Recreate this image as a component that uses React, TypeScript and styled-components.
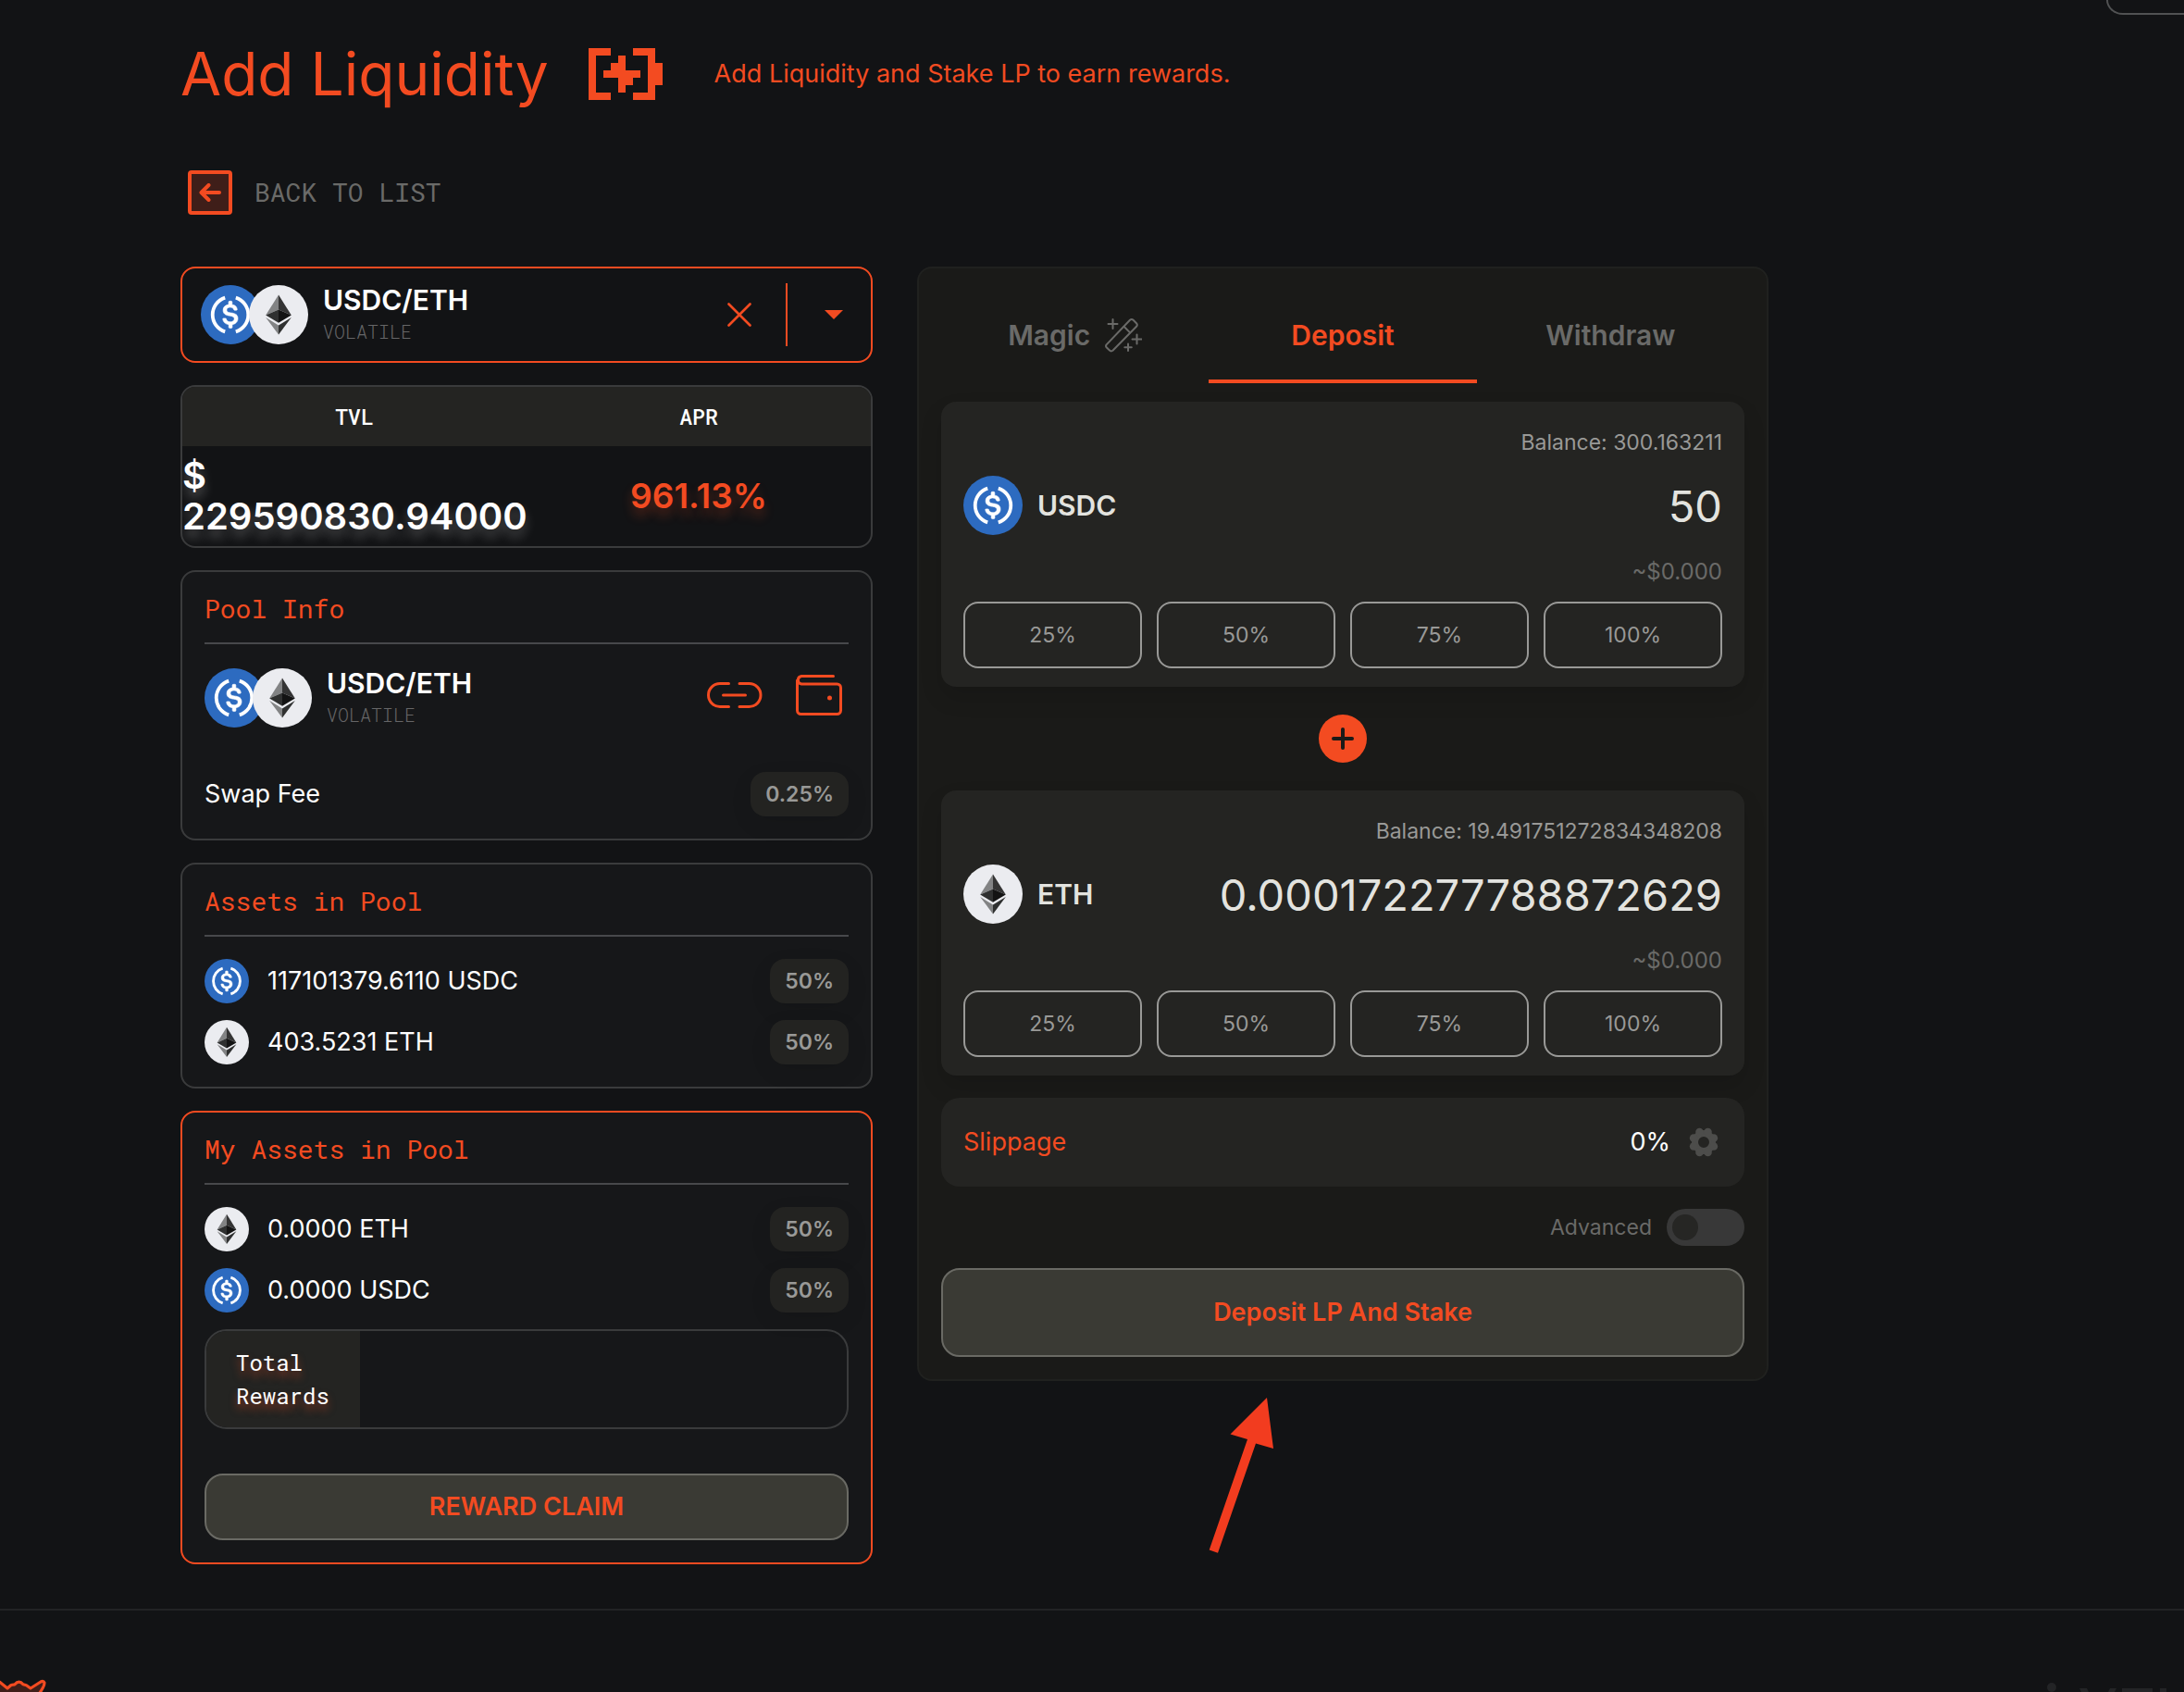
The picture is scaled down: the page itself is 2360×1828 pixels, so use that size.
import React, { useState } from 'react';
import styled, { createGlobalStyle, css } from 'styled-components';

const color = {
  page: '#121315',
  card: '#161719',
  panel: '#1a1a18',
  raised: '#242422',
  orange: '#f34b21',
  line: '#3a3b3c',
  rule: '#47484b',
  white: '#ffffff',
  bone: '#e3e3df',
  muted: '#999997',
  dim: '#6a6a68',
};

const sans = '"Inter", "Liberation Sans", sans-serif';
const mono = '"Roboto Mono", "Liberation Mono", monospace';

const GlobalStyle = createGlobalStyle`
  *, *::before, *::after { box-sizing: border-box; }
  body {
    margin: 0;
    background: ${color.page};
    color: ${color.white};
    font-family: ${sans};
    font-size: 27px;
    line-height: 32px;
    overflow-x: hidden;
  }
  button, input { font: inherit; color: inherit; margin: 0; }
  button { cursor: pointer; }
  h1, h2, p, ul { margin: 0; padding: 0; }
  svg { display: block; flex: none; }
`;

/* ---------- page frame ---------- */

const Page = styled.div`
  display: flex;
  flex-direction: column;
`;

const TopBar = styled.header`
  display: flex;
  justify-content: flex-end;
  height: 16px;
`;

const TopBarMenu = styled.div`
  width: 84px;
  border: 2px solid #515253;
  border-width: 0 0 2px 2px;
  border-bottom-left-radius: 18px 16px;
`;

const Main = styled.main`
  width: 100%;
  max-width: 1911px;
  padding: 24px 0 48px 195px;
`;

const TitleRow = styled.div`
  display: flex;
  align-items: center;
  color: ${color.orange};
`;

const Title = styled.h1`
  margin-right: 43px;
  font-size: 64px;
  line-height: 80px;
  font-weight: 400;
`;

const Subtitle = styled.p`
  margin-left: 56px;
`;

const BackLink = styled.a`
  display: inline-flex;
  align-items: center;
  gap: 24px;
  margin: 64px 0 56px 8px;
  color: ${color.dim};
  font-family: ${mono};
  font-size: 28px;
  text-decoration: none;
  text-transform: uppercase;
`;

const BackBox = styled.span`
  display: grid;
  place-items: center;
  width: 48px;
  height: 48px;
  border: 4px solid ${color.orange};
  border-radius: 4px;
  background: #3f1e19;
  color: ${color.orange};
`;

const Columns = styled.div`
  display: grid;
  grid-template-columns: minmax(0, 748fr) minmax(0, 920fr);
  gap: 48px;
  align-items: start;
`;

const Stack = styled.div`
  display: flex;
  flex-direction: column;
  gap: 24px;
`;

/* ---------- shared parts ---------- */

const IconButton = styled.button`
  display: grid;
  place-items: center;
  min-width: 32px;
  padding: 0;
  border: 0;
  background: none;
  color: ${color.orange};
`;

const Badge = styled.span`
  padding: 0 16px;
  border-radius: 16px;
  background: #232321;
  box-shadow: 0 8px 24px rgba(0, 0, 0, 0.08);
  color: ${color.muted};
  font-size: 23px;
  font-weight: 600;
  line-height: 48px;
`;

const SolidButton = styled.button<{ $tall?: boolean }>`
  width: 100%;
  height: ${(p) => (p.$tall ? 96 : 72)}px;
  border: 2px solid #6a6a64;
  border-radius: 20px;
  background: #3a3a34;
  color: ${color.orange};
  font-weight: 600;
`;

/* ---------- pool picker ---------- */

const Picker = styled.div`
  display: flex;
  align-items: center;
  gap: 34px;
  height: 104px;
  padding: 0 24px 0 20px;
  border: 2px solid ${color.orange};
  border-radius: 16px;
`;

const PickerDivider = styled.span`
  width: 2px;
  height: 68px;
  background: ${color.orange};
`;

const PairBox = styled.div`
  display: flex;
  flex: 1;
  align-items: center;
  gap: 16px;
`;

const PairIcons = styled.div`
  display: flex;

  svg + svg {
    margin-left: -12px;
  }
`;

const PairName = styled.div`
  font-size: 30px;
  font-weight: 600;
  line-height: 36px;
`;

const PairKind = styled.div`
  color: #666667;
  font-family: ${mono};
  font-size: 20px;
  font-weight: 300;
  line-height: 32px;
`;

/* ---------- stats ---------- */

const StatsFrame = styled.div`
  overflow: hidden;
  border: 2px solid ${color.line};
  border-radius: 16px;
`;

const StatsTable = styled.table`
  width: 100%;
  border-collapse: collapse;
  table-layout: fixed;

  th {
    height: 64px;
    padding: 0;
    background: ${color.raised};
    font-family: ${mono};
    font-size: 23px;
    font-weight: 500;
  }

  td {
    height: 108px;
    padding: 0;
    font-weight: 600;
    line-height: 44px;
  }
`;

const TvlCell = styled.td`
  font-size: 40px;
  text-shadow: 0 8px 12px rgba(255, 255, 255, 0.25);
`;

const AprCell = styled.td`
  color: ${color.orange};
  font-size: 37px;
  text-align: center;
  text-shadow: 0 8px 12px rgba(243, 75, 33, 0.3);
`;

/* ---------- cards on the left ---------- */

const Card = styled.section<{ $accent?: boolean }>`
  padding: 24px;
  border: 2px solid ${(p) => (p.$accent ? color.orange : color.line)};
  border-radius: 16px;
  background: ${color.card};
`;

const CardTitle = styled.h2`
  padding-bottom: 20px;
  border-bottom: 2px solid ${color.rule};
  color: ${color.orange};
  font-family: ${mono};
  font-size: 28px;
  font-weight: 400;
  line-height: 32px;
`;

const PairRow = styled.div`
  display: flex;
  align-items: center;
  margin: 24px 0 46px;
`;

const PairLinks = styled.div`
  display: flex;
  gap: 36px;
  padding: 0 7px 6px 0;
`;

const FeeRow = styled.div`
  display: flex;
  align-items: center;
  justify-content: space-between;
`;

const AssetList = styled.ul`
  display: flex;
  flex-direction: column;
  gap: 18px;
  margin-top: 24px;
  list-style: none;
`;

const AssetItem = styled.li`
  display: flex;
  align-items: center;
  gap: 20px;
`;

const AssetAmount = styled.span`
  flex: 1;
`;

const RewardsBox = styled.div`
  display: flex;
  overflow: hidden;
  margin: 18px 0 48px;
  border: 2px solid ${color.line};
  border-radius: 24px;
`;

const RewardsLabel = styled.div`
  width: 166px;
  padding: 16px 32px;
  background: ${color.raised};
  font-family: ${mono};
  font-size: 24px;
  line-height: 36px;
  text-shadow: 0 6px 8px rgba(243, 75, 33, 0.5);
`;

/* ---------- deposit panel ---------- */

const PanelWrap = styled.div`
  position: relative;
`;

const Panel = styled.section`
  padding: 24px;
  border: 2px solid #20211f;
  border-radius: 16px;
  background: ${color.panel};
`;

const Tabs = styled.div`
  display: grid;
  grid-template-columns: repeat(3, 1fr);
  margin-bottom: 20px;
`;

const Tab = styled.button<{ $active?: boolean }>`
  display: flex;
  align-items: center;
  justify-content: center;
  gap: 16px;
  height: 100px;
  padding: 0;
  border: 0;
  border-bottom: 4px solid transparent;
  background: none;
  color: ${color.dim};
  font-size: 30px;
  font-weight: 600;
  ${(p) =>
    p.$active &&
    css`
      border-color: ${color.orange};
      color: ${color.orange};
    `}
`;

const TokenCard = styled.div`
  padding: 28px 24px 20px;
  border-radius: 16px;
  background: ${color.raised};
  box-shadow: 0 12px 24px rgba(0, 0, 0, 0.12);
`;

const TokenNote = styled.p<{ $dim?: boolean }>`
  color: ${(p) => (p.$dim ? color.dim : color.muted)};
  font-size: ${(p) => (p.$dim ? 24 : 23)}px;
  text-align: right;
`;

const TokenRow = styled.label`
  display: flex;
  align-items: center;
  gap: 16px;
  margin: 20px 0 24px;
  color: ${color.bone};
  font-size: 30px;
  font-weight: 600;
`;

const AmountInput = styled.input`
  flex: 1;
  min-width: 0;
  height: 64px;
  padding: 0;
  border: 0;
  outline: 0;
  background: none;
  font-size: 47px;
  font-weight: 400;
  text-align: right;
`;

const ShareRow = styled.div`
  display: grid;
  grid-template-columns: repeat(4, 1fr);
  gap: 16px;
  margin-top: 16px;
`;

const ShareButton = styled.button`
  height: 72px;
  padding: 0;
  border: 2px solid ${color.muted};
  border-radius: 16px;
  background: none;
  color: ${color.muted};
  font-size: 23px;
`;

const PlusDot = styled.div`
  display: grid;
  place-items: center;
  width: 52px;
  height: 52px;
  margin: 30px auto;
  border-radius: 50%;
  background: ${color.orange};
  color: ${color.panel};
`;

const SlippageRow = styled.div`
  display: flex;
  align-items: center;
  gap: 16px;
  height: 96px;
  margin-top: 24px;
  padding: 0 24px;
  border-radius: 20px;
  background: ${color.raised};
`;

const SlippageLabel = styled.span`
  flex: 1;
  color: ${color.orange};
`;

const GearButton = styled(IconButton)`
  width: 40px;
  color: #4d4d4b;
`;

const AdvancedRow = styled.label`
  display: flex;
  align-items: center;
  justify-content: flex-end;
  gap: 16px;
  margin: 24px 0;
  color: ${color.dim};
  font-size: 23px;
`;

const Switch = styled.input`
  display: flex;
  align-items: center;
  width: 84px;
  height: 40px;
  padding: 0 6px;
  border-radius: 20px;
  background: #383838;
  appearance: none;

  &::before {
    content: '';
    width: 28px;
    height: 28px;
    border-radius: 50%;
    background: #262624;
  }

  &:checked {
    justify-content: flex-end;
  }
`;

const Pointer = styled.svg`
  position: absolute;
  top: calc(100% + 18px);
  left: 315px;
`;

/* ---------- footer ---------- */

const Footer = styled.footer`
  display: flex;
  align-items: flex-end;
  justify-content: space-between;
  height: 90px;
  border-top: 2px solid #222325;
`;

/* ---------- drawings ---------- */

const UsdcIcon = ({ size }: { size: number }) => (
  <svg width={size} height={size} viewBox="0 0 32 32" aria-hidden="true">
    <circle cx="16" cy="16" r="16" fill="#2d6bc0" />
    <g fill="none" stroke="#fff" strokeWidth="1.9">
      <path d="M13.1 6.8a9.65 9.65 0 0 0 0 18.4" />
      <path d="M18.9 6.8a9.65 9.65 0 0 1 0 18.4" />
    </g>
    <path
      fill="#fff"
      stroke="#fff"
      strokeWidth="0.3"
      d="M20.022 18.124c0-2.124-1.28-2.852-3.84-3.156-1.828-.243-2.193-.728-2.193-1.578 0-.85.61-1.396 1.828-1.396 1.097 0 1.707.364 2.011 1.275a.458.458 0 0 0 .427.303h.975a.416.416 0 0 0 .427-.425v-.06a3.04 3.04 0 0 0-2.743-2.489V9.142c0-.243-.183-.425-.487-.486h-.915c-.243 0-.426.182-.487.486v1.396c-1.829.242-2.986 1.456-2.986 2.974 0 2.002 1.218 2.791 3.778 3.095 1.707.303 2.255.668 2.255 1.639 0 .97-.853 1.638-2.011 1.638-1.585 0-2.133-.667-2.316-1.578-.06-.242-.244-.364-.427-.364h-1.036a.416.416 0 0 0-.426.425v.06c.243 1.518 1.219 2.61 3.23 2.914v1.457c0 .242.183.425.487.485h.915c.243 0 .426-.182.487-.485V21.34c1.829-.303 3.047-1.578 3.047-3.217z"
    />
  </svg>
);

const EthIcon = ({ size }: { size: number }) => (
  <svg width={size} height={size} viewBox="0 0 32 32" aria-hidden="true">
    <circle cx="16" cy="16" r="16" fill="#ebecf0" />
    <path fill="#828384" d="M16 5.2 9.1 16.3 16 13.2z" />
    <path fill="#343434" d="m16 5.2 6.9 11.1L16 13.2z" />
    <path fill="#2f3030" d="M16 13.2 9.1 16.3l6.9 4.1z" />
    <path fill="#131313" d="m16 13.2 6.9 3.1-6.9 4.1z" />
    <path fill="#828384" d="m9.1 17.5 6.9 4.2v5z" />
    <path fill="#2f3030" d="M22.9 17.5 16 21.7v5z" />
  </svg>
);

const LiquidityIcon = () => (
  <svg width="80" height="56" viewBox="0 0 10 7" fill="currentColor" shapeRendering="crispEdges" aria-hidden="true">
    <path d="M0 0h3v1H1v5h2v1H0z" />
    <path d="M6 0h3v2h1v3H9v2H6V6h2V1H6z" />
    <path d="M4 1h1v2h2v1H6v1H5v1H4V4H2V3h1V2h1z" />
  </svg>
);

const ArrowLeftIcon = () => (
  <svg width="24" height="20" viewBox="0 0 24 20" fill="none" stroke="currentColor" strokeWidth="4" strokeLinecap="round" strokeLinejoin="round" aria-hidden="true">
    <path d="M22 10H3M10.5 2 2.5 10l8 8" />
  </svg>
);

const CloseIcon = () => (
  <svg width="26" height="26" viewBox="0 0 26 26" fill="none" stroke="currentColor" strokeWidth="2.6" strokeLinecap="round" aria-hidden="true">
    <path d="m1.5 1.5 23 23M24.5 1.5l-23 23" />
  </svg>
);

const CaretIcon = () => (
  <svg width="20" height="10" viewBox="0 0 20 10" fill="currentColor" aria-hidden="true">
    <path d="M0 0h20L10 10z" />
  </svg>
);

const ChainIcon = () => (
  <svg width="60" height="28" viewBox="0 0 60 28" fill="none" stroke="currentColor" strokeWidth="3" strokeLinecap="round" aria-hidden="true">
    <path d="M23.5 1.5H14a12.5 12.5 0 0 0 0 25h9.5" />
    <path d="M35 1.5h10.5a12.5 12.5 0 0 1 0 25H35" />
    <path d="M17.5 14h24" />
  </svg>
);

const WalletIcon = () => (
  <svg width="50" height="44" viewBox="0 0 50 44" fill="none" stroke="currentColor" strokeWidth="3" strokeLinecap="round" aria-hidden="true">
    <path d="M40.5 1.5H6a4.3 4.3 0 0 0 0 8.500h38.500a4 4 0 0 1 4 4v24.500a4 4 0 0 1-4 4h-39a4 4 0 0 1-4-4V6" />
    <circle cx="36.5" cy="25" r="2.5" fill="currentColor" stroke="none" />
  </svg>
);

const WandIcon = () => (
  <svg width="40" height="38" viewBox="13 13 40 38" fill="none" stroke="currentColor" strokeWidth="2" strokeLinecap="round" strokeLinejoin="round" aria-hidden="true">
    <path d="M14.6 42.4 40 15.8q1.800-1.600 3.600 0l3.400 3.500q1.600 1.700 0 3.500L21.400 48.800q-1.800 1.300-3.400-.2l-3.400-3.300q-1.200-1.400 0-2.900z" />
    <path d="m33.500 22.700 6.600 6.700" />
    <path d="M21.500 15v10M16.500 20h10M47.500 31.500v10M42.500 36.500h10M38 41.500v7.500M34.300 45.300h7.500" />
  </svg>
);

const PlusIcon = () => (
  <svg width="24" height="24" viewBox="0 0 24 24" fill="none" stroke="currentColor" strokeWidth="4" strokeLinecap="round" aria-hidden="true">
    <path d="M12 2v20M2 12h20" />
  </svg>
);

const lobes = [0, 1, 2, 3, 4, 5, 6, 7].map((i) => {
  const a = ((i * 45 + 22.5) * Math.PI) / 180;
  return { x: 16 + 11.8 * Math.cos(a), y: 16 + 11.8 * Math.sin(a) };
});

const GearIcon = () => (
  <svg width="32" height="32" viewBox="0 0 32 32" aria-hidden="true">
    <circle cx="16" cy="16" r="9.5" fill="none" stroke="currentColor" strokeWidth="7" />
    {lobes.map((l, i) => (
      <circle key={i} cx={l.x} cy={l.y} r="4.3" fill="currentColor" />
    ))}
  </svg>
);

const MascotMark = () => (
  <svg width="52" height="14" viewBox="0 0 52 14" aria-hidden="true">
    <path
      d="M-6 0 0 3.500l8 6.500 4-3.500 4-.7q4.500-5.500 9 0l3.500 1L33 10 44 3q3-1.500 4 1 0 3-2 6l-3 5v8H-6z"
      fill="#3f1e19"
      stroke="#f34b21"
      strokeWidth="3.2"
      strokeLinejoin="round"
    />
  </svg>
);

const WordMark = () => (
  <svg width="148" height="10" viewBox="0 0 148 10" fill="#232426" aria-hidden="true">
    <circle cx="5" cy="5" r="5" />
    <path d="M35 6h8l2 4h-8zM68 6h7l-2 4h-7zM81 6h33v4H81zM122 6h7v4h-7z" />
  </svg>
);

/* ---------- composition ---------- */

type Token = 'USDC' | 'ETH';

const TokenIcon = ({ token, size }: { token: Token; size: number }) =>
  token === 'USDC' ? <UsdcIcon size={size} /> : <EthIcon size={size} />;

const Pair = () => (
  <PairBox>
    <PairIcons>
      <UsdcIcon size={64} />
      <EthIcon size={64} />
    </PairIcons>
    <div>
      <PairName>USDC/ETH</PairName>
      <PairKind>VOLATILE</PairKind>
    </div>
  </PairBox>
);

const Assets = ({ items }: { items: { token: Token; amount: string }[] }) => (
  <AssetList>
    {items.map(({ token, amount }) => (
      <AssetItem key={token}>
        <TokenIcon token={token} size={48} />
        <AssetAmount>
          {amount} {token}
        </AssetAmount>
        <Badge>50%</Badge>
      </AssetItem>
    ))}
  </AssetList>
);

const TokenInput = ({ token, balance, initial }: { token: Token; balance: string; initial: string }) => {
  const [value, setValue] = useState(initial);
  return (
    <TokenCard>
      <TokenNote>Balance: {balance}</TokenNote>
      <TokenRow>
        <TokenIcon token={token} size={64} />
        {token}
        <AmountInput inputMode="decimal" value={value} onChange={(e) => setValue(e.target.value)} />
      </TokenRow>
      <TokenNote $dim>~$0.000</TokenNote>
      <ShareRow>
        {[25, 50, 75, 100].map((n) => (
          <ShareButton key={n} type="button">
            {n}%
          </ShareButton>
        ))}
      </ShareRow>
    </TokenCard>
  );
};

export default function App() {
  const [advanced, setAdvanced] = useState(false);

  return (
    <Page>
      <GlobalStyle />
      <TopBar>
        <TopBarMenu />
      </TopBar>

      <Main>
        <TitleRow>
          <Title>Add Liquidity</Title>
          <LiquidityIcon />
          <Subtitle>Add Liquidity and Stake LP to earn rewards.</Subtitle>
        </TitleRow>

        <BackLink href="#">
          <BackBox>
            <ArrowLeftIcon />
          </BackBox>
          Back to list
        </BackLink>

        <Columns>
          <Stack>
            <Picker>
              <Pair />
              <IconButton type="button" aria-label="Clear">
                <CloseIcon />
              </IconButton>
              <PickerDivider />
              <IconButton type="button" aria-label="Choose pool">
                <CaretIcon />
              </IconButton>
            </Picker>

            <StatsFrame>
              <StatsTable>
                <thead>
                  <tr>
                    <th scope="col">TVL</th>
                    <th scope="col">APR</th>
                  </tr>
                </thead>
                <tbody>
                  <tr>
                    <TvlCell>$ 229590830.94000</TvlCell>
                    <AprCell>961.13%</AprCell>
                  </tr>
                </tbody>
              </StatsTable>
            </StatsFrame>

            <Card>
              <CardTitle>Pool Info</CardTitle>
              <PairRow>
                <Pair />
                <PairLinks>
                  <IconButton type="button" aria-label="Open pool contract">
                    <ChainIcon />
                  </IconButton>
                  <IconButton type="button" aria-label="Add to wallet">
                    <WalletIcon />
                  </IconButton>
                </PairLinks>
              </PairRow>
              <FeeRow>
                Swap Fee
                <Badge>0.25%</Badge>
              </FeeRow>
            </Card>

            <Card>
              <CardTitle>Assets in Pool</CardTitle>
              <Assets
                items={[
                  { token: 'USDC', amount: '117101379.6110' },
                  { token: 'ETH', amount: '403.5231' },
                ]}
              />
            </Card>

            <Card $accent>
              <CardTitle>My Assets in Pool</CardTitle>
              <Assets
                items={[
                  { token: 'ETH', amount: '0.0000' },
                  { token: 'USDC', amount: '0.0000' },
                ]}
              />
              <RewardsBox>
                <RewardsLabel>Total Rewards</RewardsLabel>
              </RewardsBox>
              <SolidButton type="button">REWARD CLAIM</SolidButton>
            </Card>
          </Stack>

          <PanelWrap>
            <Panel>
              <Tabs role="tablist">
                <Tab type="button" role="tab" aria-selected="false">
                  Magic
                  <WandIcon />
                </Tab>
                <Tab type="button" role="tab" aria-selected="true" $active>
                  Deposit
                </Tab>
                <Tab type="button" role="tab" aria-selected="false">
                  Withdraw
                </Tab>
              </Tabs>

              <TokenInput token="USDC" balance="300.163211" initial="50" />
              <PlusDot>
                <PlusIcon />
              </PlusDot>
              <TokenInput token="ETH" balance="19.491751272834348208" initial="0.000172277788872629" />

              <SlippageRow>
                <SlippageLabel>Slippage</SlippageLabel>
                <span>0%</span>
                <GearButton type="button" aria-label="Slippage settings">
                  <GearIcon />
                </GearButton>
              </SlippageRow>

              <AdvancedRow>
                Advanced
                <Switch
                  type="checkbox"
                  role="switch"
                  checked={advanced}
                  onChange={(e) => setAdvanced(e.target.checked)}
                />
              </AdvancedRow>

              <SolidButton type="button" $tall>
                Deposit LP And Stake
              </SolidButton>
            </Panel>

            <Pointer width="71" height="168" viewBox="0 0 71 168" fill="#f23c1f" aria-hidden="true">
              <path d="M63 0 23.5 39.5 42 45 .7 164.500 10 167.800 51 49.500 70 55z" />
            </Pointer>
          </PanelWrap>
        </Columns>
      </Main>

      <Footer>
        <MascotMark />
        <WordMark />
      </Footer>
    </Page>
  );
}
